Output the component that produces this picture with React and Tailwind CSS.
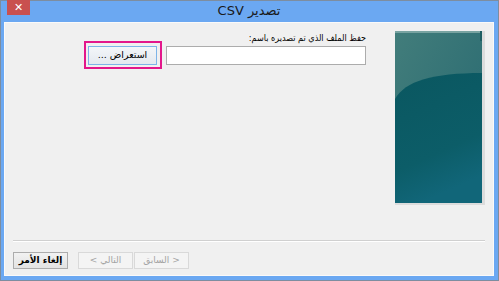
import React from 'react';

function SideArt() {
    return (
        <div className="w-[90px] h-[174px] border-r-[3px] border-b-[2px] border-[#dcdcdc]">
            <svg width="87" height="172" viewBox="0 0 87 172" className="block">
                <defs>
                    <linearGradient id="top" x1="0" y1="0" x2="1" y2="1">
                        <stop offset="0" stopColor="#427d7b" />
                        <stop offset="1" stopColor="#266870" />
                    </linearGradient>
                    <linearGradient id="low" x1="0" y1="0" x2="0.3" y2="1">
                        <stop offset="0" stopColor="#0a5760" />
                        <stop offset="0.7" stopColor="#0c5d68" />
                        <stop offset="1" stopColor="#116679" />
                    </linearGradient>
                </defs>
                <rect width="87" height="172" fill="url(#top)" />
                <path d="M0 68 C10 50 38 42 87 42 L87 172 L0 172 Z" fill="url(#low)" />
                <rect width="87" height="2" fill="#78a3a1" />
                <rect x="85" width="2" height="10" fill="#1f5e63" />
            </svg>
        </div>
    );
}

function WizardButton({ children, disabled }) {
    return (
        <div
            dir="rtl"
            className={
                disabled
                    ? 'w-[55px] h-[17px] flex items-center justify-center border border-[#d9d9d9] bg-[#f4f4f4] text-[9px] text-[#a3a3a3]'
                    : 'w-[55px] h-[17px] flex items-center justify-center border border-[#acacac] bg-gradient-to-b from-[#f2f2f2] to-[#e3e3e3] text-[9px] text-black font-bold'
            }
        >
            {children}
        </div>
    );
}

export default function App() {
    return (
        <div className="w-[499px] h-[281px] bg-[#6ba8f2] border border-[#7d8da0] flex flex-col pl-[3px] pr-[4px] pb-[4px] font-['DejaVu_Sans',Tahoma,sans-serif]">
            {/* Title bar */}
            <div className="relative h-[21px] flex items-center justify-center">
                <div className="absolute left-[3px] -top-[1px] w-[23px] h-[15px] bg-[#c9504f] flex items-center justify-center text-white text-[11px] leading-none">
                    ✕
                </div>
                <span dir="rtl" className="text-[13px] text-[#1a1a1a] leading-none -mt-[2px]">تصدير CSV</span>
            </div>

            {/* Client area */}
            <div className="flex-1 bg-[#f0f0f0] border border-[#fafafa] flex flex-col">
                <div className="h-[217px] flex justify-end gap-[29px] pr-[8px] pt-[8px]">
                    <div className="w-[278px] flex flex-col">
                        <div dir="rtl" className="h-[15px] text-[9px] leading-[15px] text-black font-['DejaVu_Sans_Condensed','DejaVu_Sans',sans-serif]">
                            حفظ الملف الذي تم تصديره باسم:
                        </div>
                        <div className="flex items-center gap-[9px]">
                            <div className="relative">
                                <div className="absolute -left-[4px] -right-[5px] -top-[5px] -bottom-[4px] border-2 border-[#e3178b]"></div>
                                <div dir="rtl" className="w-[69px] h-[19px] flex items-center justify-center border border-[#7db4e8] bg-gradient-to-b from-[#f3f6f9] to-[#e4e9ef] text-[9.5px] text-black">
                                    استعراض ...
                                </div>
                            </div>
                            <div className="w-[200px] h-[19px] bg-white border border-[#acacac]"></div>
                        </div>
                    </div>
                    <SideArt />
                </div>

                <div className="mx-[8px] border-t border-[#d0d0d0] border-b border-b-white"></div>

                <div className="flex items-center pl-[8px] mt-[10px]">
                    <WizardButton>إلغاء الأمر</WizardButton>
                    <div className="ml-[10px]">
                        <WizardButton disabled>التالي &gt;</WizardButton>
                    </div>
                    <div className="ml-[1px]">
                        <WizardButton disabled>&lt; السابق</WizardButton>
                    </div>
                </div>
            </div>
        </div>
    );
}
